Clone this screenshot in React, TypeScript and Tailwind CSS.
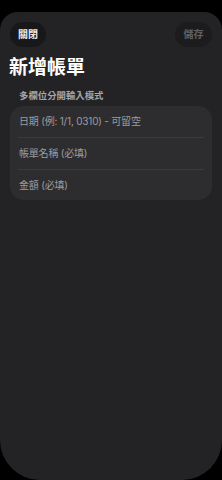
import React from "react";

export default function App() {
  const font = { fontFamily: '"Inter", "Noto Sans CJK TC", sans-serif' };
  return (
    <div className="w-[222px] h-[480px] bg-black pt-[12px] overflow-hidden" style={font}>
      <div className="h-[468px] bg-[#232325] rounded-t-[18px] rounded-b-[40px] flex flex-col">
        <div className="flex justify-between items-center px-[10px] pt-[10px]">
          <div className="w-[36px] h-[25px] rounded-full bg-[#18181a] flex items-center justify-center text-[10px] font-semibold text-[#ececec]">
            關閉
          </div>
          <div className="w-[37px] h-[25px] rounded-full bg-[#1c1c1e] flex items-center justify-center text-[10px] font-semibold text-[#5f5f62]">
            儲存
          </div>
        </div>
        <div className="px-[9px] mt-[9px] text-[19px] leading-[24px] font-bold text-white">新增帳單</div>
        <div className="px-[19px] mt-[10px] text-[9.4px] leading-[12px] font-semibold text-[#a5a5aa]">多欄位分開輸入模式</div>
        <div className="mx-[10px] mt-[4px] rounded-[14px] bg-[#2d2d30] flex flex-col">
          <div className="h-[31px] px-[9px] flex items-center text-[10px] tracking-[-0.2px] text-[#9c9ca1]">日期 (例: 1/1, 0310) - 可留空</div>
          <div className="mx-[8px] h-px bg-[#3b3b3e]" />
          <div className="h-[31px] px-[9px] flex items-center text-[10px] tracking-[-0.2px] text-[#9c9ca1]">帳單名稱 (必填)</div>
          <div className="mx-[8px] h-px bg-[#3b3b3e]" />
          <div className="h-[30px] px-[9px] flex items-center text-[10px] tracking-[-0.2px] text-[#9c9ca1]">金額 (必填)</div>
        </div>
      </div>
    </div>
  );
}
